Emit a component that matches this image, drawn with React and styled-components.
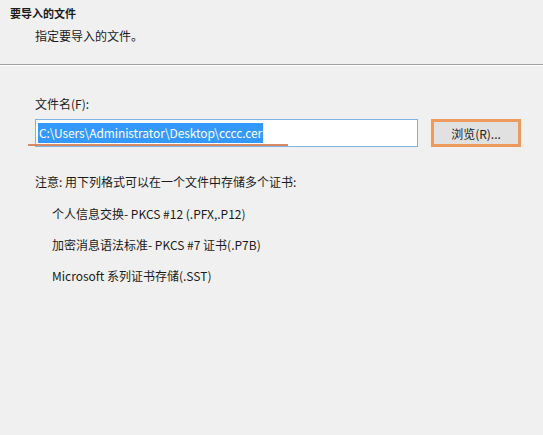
import React from 'react';
import styled, { createGlobalStyle } from 'styled-components';

const GlobalStyle = createGlobalStyle`
  html, body {
    margin: 0;
    padding: 0;
    background: #f0f0f0;
  }
  body {
    font-family: "Noto Sans CJK SC", "Noto Sans", sans-serif;
    font-size: 12px;
    color: #1b1b1b;
  }
`;

const Page = styled.div`
  width: 543px;
  height: 435px;
  background: #f0f0f0;
  overflow: hidden;
`;

const Header = styled.div`
  height: 64px;
  border-bottom: 1px solid #a0a0a0;
  box-shadow: 0 1px 0 #ffffff;
  display: flex;
  flex-direction: column;
`;

const Title = styled.div`
  font-weight: bold;
  font-size: 11px;
  line-height: 14px;
  margin: 6px 0 0 10px;
`;

const SubTitle = styled.div`
  font-size: 12px;
  line-height: 16px;
  margin: 8px 0 0 35px;
`;

const Body = styled.div`
  padding: 31px 0 0 35px;
  display: flex;
  flex-direction: column;
`;

const Label = styled.div`
  line-height: 16px;
`;

const FileRow = styled.div`
  display: flex;
  align-items: center;
  gap: 13px;
  margin-top: 7px;
`;

const InputWrap = styled.div`
  position: relative;
`;

const FileInput = styled.div`
  width: 379px;
  height: 26px;
  background: #ffffff;
  border: 1px solid #7fb2e5;
  display: flex;
  align-items: center;
  padding-left: 2px;
  box-sizing: content-box;
`;

const Selected = styled.span`
  background: #3399ff;
  color: #ffffff;
  font-size: 12px;
  letter-spacing: -0.1px;
  line-height: 20px;
  padding: 0 1px;
`;

const Underline = styled.div`
  position: absolute;
  left: -7px;
  top: 25px;
  width: 260px;
  height: 2px;
  background: #d98a64;
`;

const Highlight = styled.div`
  border: 3px solid #ee9a5d;
  width: 84px;
  height: 22px;
`;

const Button = styled.button`
  width: 100%;
  height: 100%;
  margin: 0;
  background: #e1e1e1;
  border: none;
  font-family: inherit;
  font-size: 12px;
  color: #1b1b1b;
  padding: 0;
`;

const Note = styled.div`
  margin-top: 27px;
  line-height: 16px;
`;

const FormatList = styled.div`
  display: flex;
  flex-direction: column;
  gap: 15px;
  margin: 16px 0 0 17px;
`;

const FormatItem = styled.div`
  line-height: 16px;
`;

const formats = [
  '个人信息交换- PKCS #12 (.PFX,.P12)',
  '加密消息语法标准- PKCS #7 证书(.P7B)',
  'Microsoft 系列证书存储(.SST)',
];

const App = () => (
  <Page>
    <GlobalStyle />
    <Header>
      <Title>要导入的文件</Title>
      <SubTitle>指定要导入的文件。</SubTitle>
    </Header>
    <Body>
      <Label>文件名(F):</Label>
      <FileRow>
        <InputWrap>
          <FileInput>
            <Selected>C:\Users\Administrator\Desktop\cccc.cer</Selected>
          </FileInput>
          <Underline />
        </InputWrap>
        <Highlight>
          <Button>浏览(R)...</Button>
        </Highlight>
      </FileRow>
      <Note>注意: 用下列格式可以在一个文件中存储多个证书:</Note>
      <FormatList>
        {formats.map((f) => (
          <FormatItem key={f}>{f}</FormatItem>
        ))}
      </FormatList>
    </Body>
  </Page>
);

export default App;
